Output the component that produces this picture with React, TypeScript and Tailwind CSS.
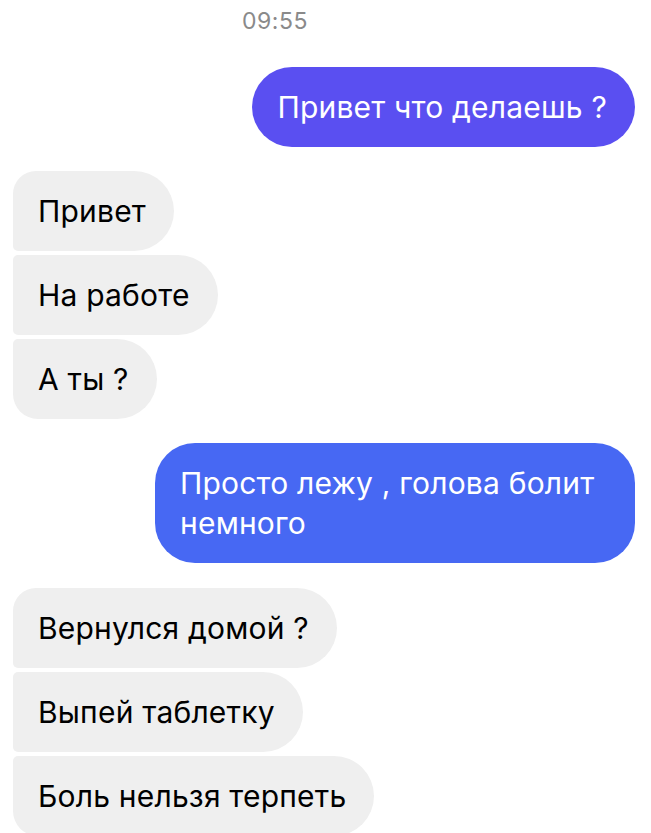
const font = { fontFamily: '"Inter", "Roboto", "Liberation Sans", sans-serif' };

type Pos = 'first' | 'middle' | 'last';

function Incoming({ text, pos }: { text: string; pos: Pos }) {
  const corners =
    pos === 'first'
      ? 'rounded-tl-[23px] rounded-bl-[5px]'
      : pos === 'last'
        ? 'rounded-tl-[5px] rounded-bl-[25px]'
        : 'rounded-l-[5px]';
  return (
    <div
      className={`self-start bg-[#efefef] text-black text-[30px] leading-[40px] tracking-[0.2px] pl-[25px] pr-[28px] py-[20px] rounded-r-[40px] ${corners}`}
    >
      {text}
    </div>
  );
}

function Outgoing({ text, color }: { text: string; color: string }) {
  return (
    <div
      className={`self-end max-w-[480px] text-white text-[30px] leading-[40px] tracking-[0.2px] pl-[25px] pr-[28px] py-[20px] rounded-[40px] ${color}`}
    >
      {text}
    </div>
  );
}

export default function App() {
  return (
    <div className="w-[651px] h-[833px] overflow-hidden bg-white" style={font}>
      <div className="pt-[7px] pl-[242px] text-[23px] leading-[28px] tracking-[0.5px] text-[#8a8a8a]">09:55</div>

      <div className="flex flex-col pl-[13px] pr-[16px] pt-[32px]">
        <Outgoing text="Привет что делаешь ?" color="bg-[#5a4ff1]" />

        <div className="flex flex-col gap-[4px] mt-[24px]">
          <Incoming text="Привет" pos="first" />
          <Incoming text="На работе" pos="middle" />
          <Incoming text="А ты ?" pos="last" />
        </div>

        <div className="mt-[24px] flex flex-col">
          <Outgoing text="Просто лежу , голова болит немного" color="bg-[#4768f3]" />
        </div>

        <div className="flex flex-col gap-[4px] mt-[25px]">
          <Incoming text="Вернулся домой ?" pos="first" />
          <Incoming text="Выпей таблетку" pos="middle" />
          <Incoming text="Боль нельзя терпеть" pos="last" />
        </div>
      </div>
    </div>
  );
}
